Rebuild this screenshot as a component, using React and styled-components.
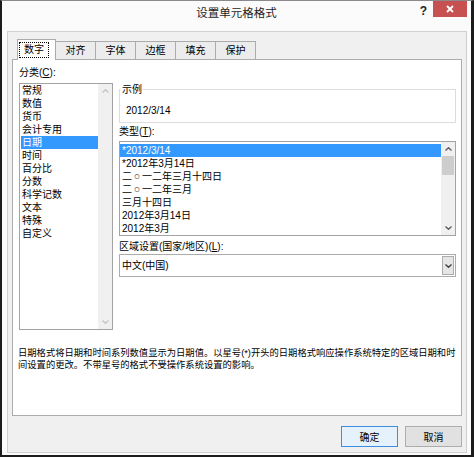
import React from 'react'
import styled, { createGlobalStyle } from 'styled-components'

const tabs = ['数字', '对齐', '字体', '边框', '填充', '保护']

const categories = [
  '常规', '数值', '货币', '会计专用', '日期', '时间',
  '百分比', '分数', '科学记数', '文本', '特殊', '自定义',
]

const dateTypes = [
  '*2012/3/14',
  '*2012年3月14日',
  '二〇一二年三月十四日',
  '二〇一二年三月',
  '三月十四日',
  '2012年3月14日',
  '2012年3月',
]

const GlobalStyle = createGlobalStyle`
  html, body {
    margin: 0;
    padding: 0;
    background: #fff;
  }
  body {
    font-family: "Liberation Sans", "Noto Sans CJK SC", sans-serif;
    font-size: 10px;
    color: #000;
  }
  * {
    box-sizing: border-box;
  }
`

const Chevron = ({ dir, color }) => (
  <svg width="7" height="4" viewBox="0 0 7 4">
    <polyline
      points={dir === 'up' ? '0.5,3.5 3.5,0.7 6.5,3.5' : '0.5,0.5 3.5,3.3 6.5,0.5'}
      fill="none"
      stroke={color}
      strokeWidth="1.3"
    />
  </svg>
)

const Scroller = ({ disabled }) => {
  const color = disabled ? '#c4c4c4' : '#5a5a5a'
  return (
    <ScrollBar>
      <ScrollArrow><Chevron dir="up" color={color} /></ScrollArrow>
      <ScrollTrack>{!disabled && <ScrollThumb />}</ScrollTrack>
      <ScrollArrow><Chevron dir="down" color={color} /></ScrollArrow>
    </ScrollBar>
  )
}

const withRings = (text) =>
  text.split('〇').flatMap((part, i) => (i === 0 ? [part] : [<Ring key={i}>〇</Ring>, part]))

const App = () => {
  return (
    <>
      <GlobalStyle />
      <Window>
        <TitleBar>
          <span />
          <Title>设置单元格格式</Title>
          <TitleControls>
            <HelpButton>?</HelpButton>
            <CloseButton>
              <svg width="8" height="8" viewBox="0 0 8 8">
                <path d="M1 1 L7 7 M7 1 L1 7" stroke="#fff" strokeWidth="1.8" />
              </svg>
            </CloseButton>
          </TitleControls>
        </TitleBar>

        <Client>
          <TabStrip>
            {tabs.map((t, i) => (
              <Tab key={t} $active={i === 0}>
                {i === 0 ? <FocusBox>{t}</FocusBox> : t}
              </Tab>
            ))}
          </TabStrip>

          <Panel>
            <Columns>
              <LeftColumn>
                <FieldLabel>分类(<u>C</u>):</FieldLabel>
                <ListBox $height={247}>
                  <ListItems $inset={1} $top={0}>
                    {categories.map((c) => (
                      <Row key={c} $selected={c === '日期'}>{c}</Row>
                    ))}
                  </ListItems>
                  <Scroller disabled />
                </ListBox>
              </LeftColumn>

              <RightColumn>
                <SampleBox>
                  <SampleLegend>示例</SampleLegend>
                  <SampleText>2012/3/14</SampleText>
                </SampleBox>

                <FieldLabel $top={3} $bottom={3}>类型(<u>T</u>):</FieldLabel>
                <ListBox $height={95}>
                  <ListItems $inset={0} $top={2}>
                    {dateTypes.map((d, i) => (
                      <Row key={d} $selected={i === 0} $pad={2}>{withRings(d)}</Row>
                    ))}
                  </ListItems>
                  <Scroller />
                </ListBox>

                <FieldLabel $top={5} $bottom={1}>区域设置(国家/地区)(<u>L</u>):</FieldLabel>
                <Select>
                  <SelectValue>中文(中国)</SelectValue>
                  <SelectButton>
                    <Chevron dir="down" color="#3c3c3c" />
                  </SelectButton>
                </Select>
              </RightColumn>
            </Columns>

            <Description>
              日期格式将日期和时间系列数值显示为日期值。以星号(*)开头的日期格式响应操作系统特定的区域日期和时
              <br />
              间设置的更改。不带星号的格式不受操作系统设置的影响。
            </Description>
          </Panel>

          <ButtonRow>
            <DialogButton $default>确定</DialogButton>
            <DialogButton>取消</DialogButton>
          </ButtonRow>
        </Client>
      </Window>
    </>
  )
}

export default App

const Window = styled.div`
  width: 474px;
  height: 457px;
  display: flex;
  flex-direction: column;
  background: #fbfbfb;
  border: 2px solid #1c1c1c;
  border-top: 1px solid #8a8a8a;
  border-right-width: 3px;
`

const TitleBar = styled.header`
  height: 30px;
  flex: none;
  display: grid;
  grid-template-columns: 1fr auto 1fr;
  align-items: start;
`

const Title = styled.h1`
  margin: 0;
  padding-top: 5px;
  font-size: 11.5px;
  line-height: 14px;
  font-weight: normal;
  color: #1e1e1e;
`

const TitleControls = styled.div`
  display: flex;
  justify-content: flex-end;
  align-items: flex-start;
  padding-right: 4px;
`

const HelpButton = styled.span`
  margin: 4px 6px 0 0;
  font-size: 12px;
  line-height: 13px;
  font-weight: bold;
  color: #222;
`

const CloseButton = styled.span`
  width: 34px;
  height: 16px;
  display: flex;
  align-items: center;
  justify-content: center;
  background: #c75050;
`

const Client = styled.div`
  flex: 1;
  display: flex;
  flex-direction: column;
  margin: 0 4px 2px 5px;
  padding: 7px 4px 5px;
  border: 1px solid #d0d0d0;
  background: #f0f0f0;
`

const TabStrip = styled.div`
  display: flex;
  align-items: flex-end;
  padding-left: 5px;
`

const Tab = styled.div`
  position: relative;
  z-index: ${(p) => (p.$active ? 1 : 0)};
  width: ${(p) => (p.$active ? 39 : 41)}px;
  height: ${(p) => (p.$active ? 21 : 18)}px;
  margin-left: -1px;
  margin-bottom: ${(p) => (p.$active ? -1 : 0)}px;
  display: flex;
  align-items: center;
  justify-content: ${(p) => (p.$active ? 'flex-start' : 'center')};
  padding-left: ${(p) => (p.$active ? 1 : 0)}px;
  border: 1px solid #acacac;
  border-bottom: none;
  background: ${(p) => (p.$active ? '#fff' : '#ececec')};
  font-size: 10px;
  line-height: 12px;

  &:first-child {
    margin-left: 0;
  }
`

const FocusBox = styled.span`
  padding: 1px 4px;
  border: 1px dotted #000;
`

const Panel = styled.div`
  height: 357px;
  flex: none;
  display: flex;
  flex-direction: column;
  padding: 7px 5px 0 6px;
  border: 1px solid #acacac;
  background: #fff;
`

const Columns = styled.div`
  display: flex;
  gap: 6px;
  align-items: flex-start;
`

const LeftColumn = styled.div`
  width: 94px;
  flex: none;
  display: flex;
  flex-direction: column;
`

const RightColumn = styled.div`
  flex: 1;
  min-width: 0;
  display: flex;
  flex-direction: column;
`

const FieldLabel = styled.div`
  margin-top: ${(p) => p.$top || 0}px;
  margin-bottom: ${(p) => (p.$bottom === undefined ? 4 : p.$bottom)}px;
  line-height: 12px;
  white-space: nowrap;
`

const ListBox = styled.div`
  height: ${(p) => p.$height}px;
  display: flex;
  overflow: hidden;
  border: 1px solid #a3a3a3;
  background: #fff;
`

const ListItems = styled.div`
  flex: 1;
  min-width: 0;
  padding: ${(p) => p.$top}px 0 0 ${(p) => p.$inset}px;
`

const Row = styled.div`
  height: 13px;
  line-height: 13px;
  padding-left: ${(p) => p.$pad || 1}px;
  white-space: nowrap;
  background: ${(p) => (p.$selected ? '#3399ff' : 'transparent')};
  color: ${(p) => (p.$selected ? '#fff' : '#000')};
`

const Ring = styled.span`
  display: inline-block;
  width: 10px;
  font-size: 5px;
  line-height: 13px;
  text-align: center;
  vertical-align: top;
`

const ScrollBar = styled.div`
  width: 14px;
  flex: none;
  display: flex;
  flex-direction: column;
  background: #f0f0f0;
`

const ScrollArrow = styled.div`
  height: 14px;
  flex: none;
  display: flex;
  align-items: center;
  justify-content: center;
`

const ScrollTrack = styled.div`
  flex: 1;
  padding: 0 1px;
`

const ScrollThumb = styled.div`
  height: 19px;
  background: #cdcdcd;
`

const SampleBox = styled.fieldset`
  margin: 17px 0 0;
  padding: 10px 6px 5px;
  min-width: 0;
  border: 1px solid #dcdcdc;
`

const SampleLegend = styled.legend`
  margin-left: -6px;
  padding: 0 1px 0 2px;
  line-height: 11px;
`

const SampleText = styled.div`
  line-height: 12px;
`

const Select = styled.div`
  height: 23px;
  display: flex;
  padding: 1px;
  border: 1px solid #acacac;
  background: #fff;
`

const SelectValue = styled.div`
  flex: 1;
  padding-left: 1px;
  line-height: 19px;
`

const SelectButton = styled.div`
  width: 12px;
  display: flex;
  align-items: center;
  justify-content: center;
  border: 1px solid #acacac;
  background: #e5e5e5;
`

const Description = styled.p`
  margin: 17px 0 0 -1px;
  font-size: 9.3px;
  line-height: 12px;
  white-space: nowrap;
`

const ButtonRow = styled.div`
  margin-top: 10px;
  display: flex;
  justify-content: flex-end;
  gap: 7px;
`

const DialogButton = styled.button`
  width: 57px;
  height: 21px;
  padding: 0;
  font-family: inherit;
  font-size: 10px;
  color: #000;
  background: ${(p) => (p.$default ? '#e5f1fb' : '#e1e1e1')};
  border: 1px solid ${(p) => (p.$default ? '#3c8fe0' : '#adadad')};
`
